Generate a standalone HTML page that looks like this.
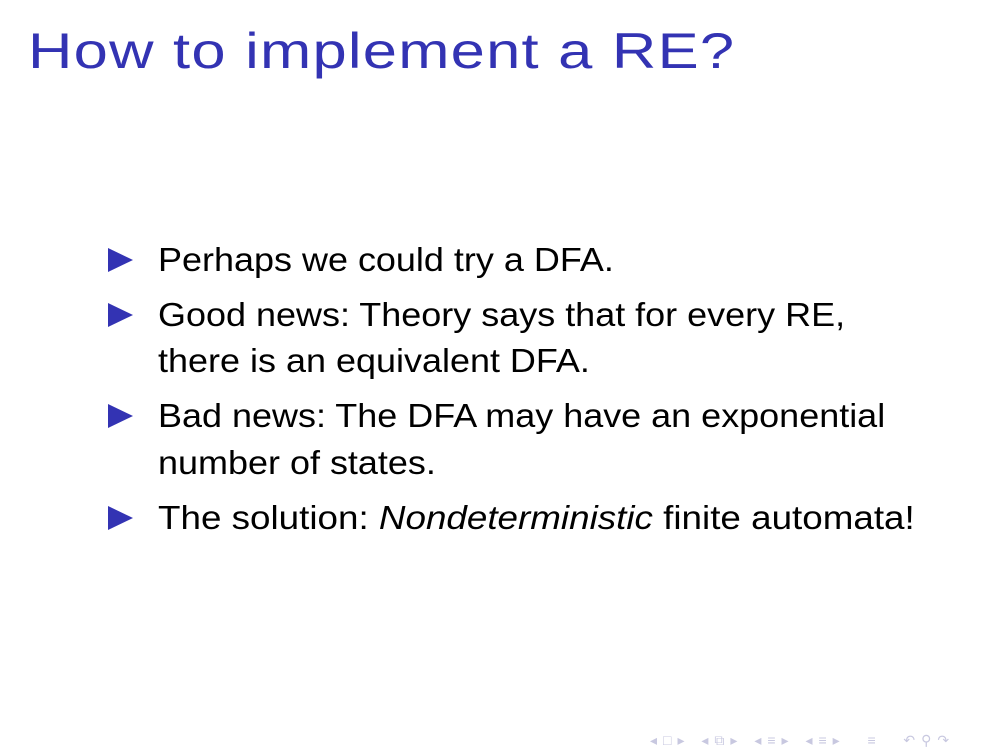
<!DOCTYPE html>
<html><head><meta charset="utf-8"><style>
body{margin:0;width:1008px;height:756px;background:#fff;position:relative;overflow:hidden;font-family:"Liberation Sans","DejaVu Sans",sans-serif}
.t{position:absolute;left:28px;top:22px;font-size:50px;color:#3333b3;white-space:nowrap;letter-spacing:1px;transform:scaleX(1.23);transform-origin:0 0}
.l{position:absolute;left:158px;font-size:33px;color:#000;white-space:nowrap;line-height:1;transform:scaleX(1.09);transform-origin:0 0}
.b{position:absolute;left:108px;width:0;height:0;border-top:12px solid transparent;border-bottom:12px solid transparent;border-left:25px solid #3333b3}
.nav{position:absolute;left:650px;top:732px;font-size:14px;color:#c8c8e0;white-space:nowrap;letter-spacing:6px;word-spacing:1px}
</style></head><body>
<div class="t">How to implement a RE?</div>
<div class="b" style="top:248px"></div>
<div class="l" style="top:243px">Perhaps we could try a DFA.</div>
<div class="b" style="top:303px"></div>
<div class="l" style="top:298px">Good news: Theory says that for every RE,</div>
<div class="l" style="top:344px">there is an equivalent DFA.</div>
<div class="b" style="top:404px"></div>
<div class="l" style="top:399px">Bad news: The DFA may have an exponential</div>
<div class="l" style="top:446px">number of states.</div>
<div class="b" style="top:506px"></div>
<div class="l" style="top:501px;transform:scaleX(1.115)">The solution: <i>Nondeterministic</i> finite automata!</div>
<div class="nav">◂□▸ ◂⧉▸ ◂≡▸ ◂≡▸ &nbsp;≡&nbsp; ↶⚲↷</div>
</body></html>
